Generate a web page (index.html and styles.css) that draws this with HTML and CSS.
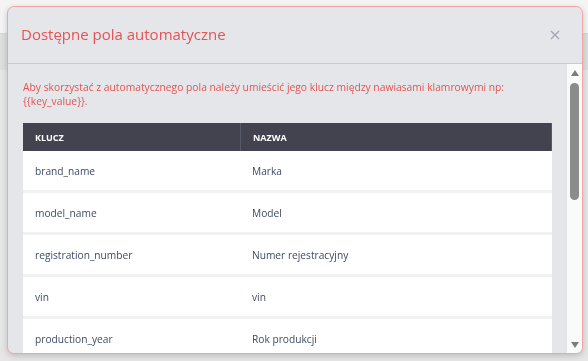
FILE: index.html
```html
<!DOCTYPE html>
<html lang="pl">
<head>
    <meta charset="UTF-8">
    <meta name="viewport" content="width=device-width, initial-scale=1.0">
    <title>Dostępne pola automatyczne</title>
    <link rel="stylesheet" href="styles.css">
</head>
<body>
    <div class="page">
        <div class="page-top"></div>
        <div class="page-band"></div>
    </div>

    <div class="backdrop">
        <div class="modal">
            <div class="modal-header">
                <h2 class="modal-title">Dostępne pola automatyczne</h2>
                <button class="modal-close" type="button" aria-label="Zamknij">
                    <svg width="10" height="10" viewBox="0 0 10 10">
                        <path d="M1 1 L9 9 M9 1 L1 9" stroke="#9ea3ae" stroke-width="1.2" fill="none"/>
                    </svg>
                </button>
            </div>

            <div class="modal-body">
                <div class="modal-scroll">
                    <p class="hint">Aby skorzystać z automatycznego pola należy umieścić jego klucz między nawiasami klamrowymi np:<br>{{key_value}}.</p>

                    <table class="keys-table">
                        <thead>
                            <tr>
                                <th class="col-key">Klucz</th>
                                <th>Nazwa</th>
                            </tr>
                        </thead>
                        <tbody>
                            <tr><td>brand_name</td><td>Marka</td></tr>
                            <tr><td>model_name</td><td>Model</td></tr>
                            <tr><td>registration_number</td><td>Numer rejestracyjny</td></tr>
                            <tr><td>vin</td><td>vin</td></tr>
                            <tr><td>production_year</td><td>Rok produkcji</td></tr>
                        </tbody>
                    </table>
                </div>

                <div class="scrollbar">
                    <span class="scroll-arrow up"></span>
                    <div class="scroll-track">
                        <div class="scroll-thumb"></div>
                    </div>
                    <span class="scroll-arrow down"></span>
                </div>
            </div>
        </div>
    </div>
</body>
</html>
```

FILE: styles.css
```css
:root {
    --modal-bg: #e5e6ea;
    --modal-border: #f3a4a4;
    --accent-red: #e55353;
    --table-head: #42434f;
    --table-text: #3c4b64;
    --row-gap: #f2f2f3;
}

* {
    margin: 0;
    padding: 0;
    box-sizing: border-box;
}

body {
    font-family: 'Open Sans', 'Noto Sans', sans-serif;
    background: #e6e6e6;
    height: 361px;
    overflow: hidden;
}

.page-top {
    height: 34px;
    background: #f4f4f4;
    border-bottom: 1px solid #d6d6d6;
}

.page-band {
    height: 36px;
    background: #dedede;
}

.backdrop {
    position: fixed;
    inset: 0;
    padding: 6px 5px 0 7px;
}

.modal {
    background: var(--modal-bg);
    border: 1px solid var(--modal-border);
    border-radius: 7px;
    height: 348px;
    box-shadow: 0 2px 6px rgba(0, 0, 0, 0.18);
    overflow: hidden;
}

.modal-header {
    display: flex;
    align-items: center;
    justify-content: space-between;
    height: 57px;
    padding: 0 22px 0 13px;
    border-bottom: 1px solid #c8cad3;
}

.modal-title {
    font-size: 15px;
    font-weight: 400;
    color: var(--accent-red);
    padding-bottom: 3px;
}

.modal-close {
    background: none;
    border: none;
    width: 10px;
    height: 10px;
    display: flex;
    cursor: pointer;
}

.modal-body {
    display: flex;
    height: 289px;
}

.modal-scroll {
    flex: 1;
    overflow: hidden;
    padding: 16px 15px 0 15px;
}

/* scrollbar drawn by hand, the headless browser hides the native one */
.scrollbar {
    width: 15px;
    background: #fafafa;
    display: flex;
    flex-direction: column;
    align-items: center;
    padding: 6px 0 5px;
}

.scroll-arrow {
    width: 0;
    height: 0;
    border-left: 4px solid transparent;
    border-right: 4px solid transparent;
}

.scroll-arrow.up {
    border-bottom: 6px solid #7c7c7c;
}

.scroll-arrow.down {
    border-top: 6px solid #7c7c7c;
}

.scroll-track {
    flex: 1;
    padding-top: 7px;
}

.scroll-thumb {
    width: 9px;
    height: 117px;
    background: #8b8b8b;
    border-radius: 5px;
}

.hint {
    font-size: 10.3px;
    line-height: 14px;
    color: var(--accent-red);
    margin-bottom: 15px;
}

.keys-table {
    width: 100%;
    border-collapse: separate;
    border-spacing: 0;
    background: #fff;
    font-size: 10.2px;
    color: var(--table-text);
}

.keys-table th {
    background: var(--table-head);
    color: #fff;
    font-size: 9px;
    font-weight: 700;
    text-transform: uppercase;
    text-align: left;
    height: 28px;
    padding: 0 12px;
    border-right: 1px solid #575a68;
}

.keys-table th + th {
    border-left: 1px solid #575a68;
}

.keys-table .col-key {
    width: 217px;
    border-right: none;
}

.keys-table td {
    box-sizing: content-box;
    height: 39px;
    padding: 0 12px;
}

.keys-table tr + tr td {
    border-top: 3px solid var(--row-gap);
}
```
